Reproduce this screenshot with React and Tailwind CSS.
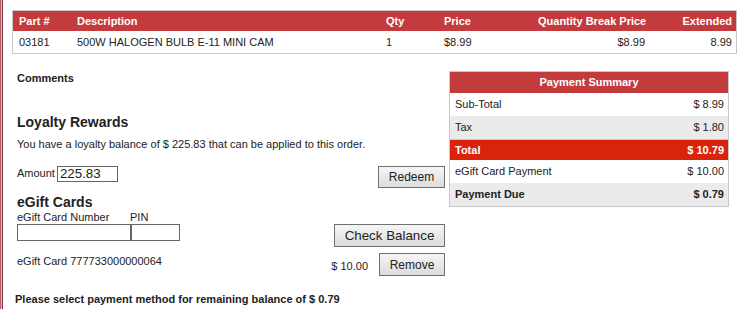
import React from "react";

const font = { fontFamily: '"Liberation Sans", Arial, sans-serif' };

function Btn({ children, className = "" }) {
  return (
    <button
      className={`border border-[#707070] bg-gradient-to-b from-[#f6f6f6] to-[#dcdcdc] text-[#222] leading-none flex items-center justify-center ${className}`}
      style={font}
    >
      {children}
    </button>
  );
}

function SumRow({ label, value, className = "", bold = false }) {
  return (
    <div className={`flex items-center justify-between pl-[5px] pr-[4px] text-[11px] leading-[13px] ${bold ? "font-bold" : ""} ${className}`}>
      <span>{label}</span>
      <span>{value}</span>
    </div>
  );
}

export default function App() {
  return (
    <div className="w-[738px] h-[309px] overflow-hidden bg-white flex text-[#222]" style={font}>
      <div className="w-[3px] h-full shrink-0 border-l border-r border-l-[#b5606b] border-r-[#7a3540] bg-[#e8b7bd]" />
      <div className="flex-1 flex flex-col">
        {/* items table */}
        <div className="ml-[9px] mt-[10px] w-[725px] border border-[#c8c8c8] text-[11px] leading-[13px] whitespace-nowrap">
          <div className="flex items-center h-[20px] bg-[#c43b3e] text-white font-bold">
            <div className="w-[58px] pl-[6px]">Part #</div>
            <div className="w-[310px] pl-[6px]">Description</div>
            <div className="w-[57px] pl-[5px]">Qty</div>
            <div className="w-[100px] pl-[6px]">Price</div>
            <div className="w-[113px] pr-[6px] text-right">Quantity Break Price</div>
            <div className="flex-1 pr-[4px] text-right">Extended</div>
          </div>
          <div className="flex items-center h-[22px] bg-white">
            <div className="w-[58px] pl-[6px]">03181</div>
            <div className="w-[310px] pl-[6px]">500W HALOGEN BULB E-11 MINI CAM</div>
            <div className="w-[57px] pl-[5px]">1</div>
            <div className="w-[100px] pl-[6px]">$8.99</div>
            <div className="w-[113px] pr-[6px] text-right">$8.99</div>
            <div className="flex-1 pr-[4px] text-right">8.99</div>
          </div>
        </div>

        <div className="ml-[9px] flex items-start">
          {/* left column */}
          <div className="w-[433px] pl-[5px] flex flex-col">
            <div className="mt-[18px] text-[11px] leading-[13px] font-bold">Comments</div>
            <div className="mt-[29px] text-[14px] leading-[16px] font-bold">Loyalty Rewards</div>
            <div className="mt-[8px] text-[11px] leading-[13px]">
              You have a loyalty balance of $ 225.83 that can be applied to this order.
            </div>
            <div className="mt-[15px] flex items-start justify-between">
              <div className="flex items-start">
                <span className="text-[11px] leading-[13px] pt-[1px]">Amount</span>
                <div className="ml-[2px] w-[61px] h-[16px] border border-[#666] flex items-center pl-[2px] text-[13.33px] leading-none">
                  225.83
                </div>
              </div>
              <Btn className="w-[67px] h-[22px] text-[12px]">Redeem</Btn>
            </div>
            <div className="mt-[6px] text-[14px] leading-[16px] font-bold">eGift Cards</div>
            <div className="mt-[1px] flex text-[11px] leading-[13px]">
              <span className="w-[113px]">eGift Card Number</span>
              <span>PIN</span>
            </div>
            <div className="flex items-start justify-between">
              <div className="flex">
                <div className="w-[114px] h-[17px] border border-[#666]" />
                <div className="w-[49px] h-[17px] border border-[#666]" />
              </div>
              <Btn className="w-[111px] h-[23px] text-[13.33px]">Check Balance</Btn>
            </div>
            <div className="mt-[6px] flex items-start justify-between">
              <span className="pt-[2px] text-[11px] leading-[13px]">eGift Card 777733000000064</span>
              <div className="flex items-center">
                <span className="pt-[3px] text-[11px] leading-[13px]">$ 10.00</span>
                <Btn className="ml-[11px] w-[66px] h-[23px] text-[12px]">Remove</Btn>
              </div>
            </div>
            <div className="mt-[17px] -ml-[2px] text-[11px] leading-[13px] font-bold whitespace-nowrap">
              Please select payment method for remaining balance of $ 0.79
            </div>
          </div>

          {/* payment summary */}
          <div className="ml-[4px] mt-[17px] w-[280px] border border-[#c8c8c8] flex flex-col">
            <div className="h-[21px] bg-[#c43b3e] text-white font-bold text-[11px] leading-[13px] flex items-center justify-center">
              Payment Summary
            </div>
            <SumRow label="Sub-Total" value="$ 8.99" className="h-[23px] bg-white" />
            <SumRow label="Tax" value="$ 1.80" className="h-[24px] bg-[#ebebeb] border-b border-[#c8c8c8]" />
            <SumRow label="Total" value="$ 10.79" bold className="h-[20px] bg-[#d9230b] text-white" />
            <SumRow label="eGift Card Payment" value="$ 10.00" className="h-[23px] bg-white" />
            <SumRow label="Payment Due" value="$ 0.79" bold className="h-[23px] bg-[#ebebeb]" />
          </div>
        </div>
      </div>
    </div>
  );
}
